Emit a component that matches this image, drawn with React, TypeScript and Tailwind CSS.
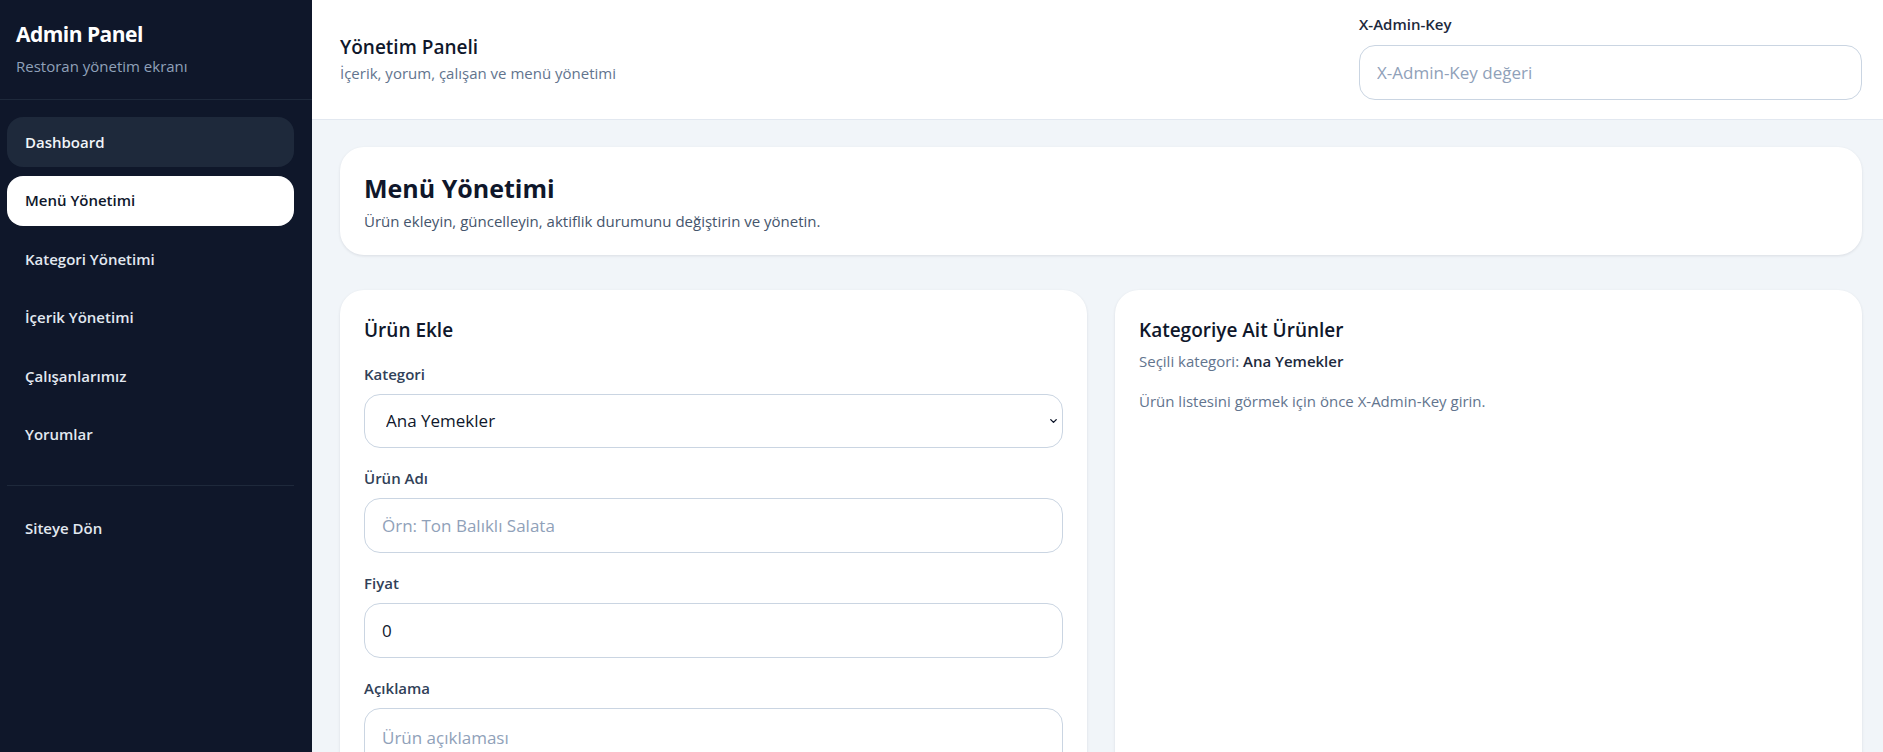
import { ChevronDown } from "lucide-react";

type NavItem = {
    label: string;
    state?: "hover" | "active";
};

const navItems: NavItem[] = [
    { label: "Dashboard", state: "hover" },
    { label: "Menü Yönetimi", state: "active" },
    { label: "Kategori Yönetimi" },
    { label: "İçerik Yönetimi" },
    { label: "Çalışanlarımız" },
    { label: "Yorumlar" },
];

const navClass = (state?: NavItem["state"]) => {
    const base =
        "flex h-[50px] items-center rounded-2xl pl-[18px] text-[15px] font-semibold";
    if (state === "active") return `${base} bg-white text-slate-900`;
    if (state === "hover") return `${base} bg-[#1e293b] text-slate-100`;
    return `${base} text-slate-200`;
};

const Sidebar = () => (
    <aside className="w-[312px] shrink-0 bg-[#0f172a]">
        <div className="h-[100px] border-b border-[#1e293b] px-4 pt-5">
            <h1 className="text-[21px] font-bold leading-7 tracking-tight text-white">
                Admin Panel
            </h1>
            <p className="mt-2 text-[15px] leading-5 text-slate-400">
                Restoran yönetim ekranı
            </p>
        </div>
        <nav className="flex flex-col gap-[8.5px] pl-[7px] pr-[18px] pt-[17px]">
            {navItems.map((item) => (
                <a key={item.label} href="#" className={navClass(item.state)}>
                    {item.label}
                </a>
            ))}
            <div className="mb-[9px] mt-[17px] h-px bg-[#1e293b]" />
            <a href="#" className={navClass()}>
                Siteye Dön
            </a>
        </nav>
    </aside>
);

const Field = ({
    label,
    children,
}: {
    label: string;
    children: React.ReactNode;
}) => (
    <div className="flex flex-col">
        <label className="mb-[10px] text-[15px] font-semibold leading-5 text-slate-700">
            {label}
        </label>
        {children}
    </div>
);

const inputClass =
    "h-[55px] w-full rounded-2xl border border-slate-300 bg-white px-[17px] text-[17px] text-slate-900 outline-none placeholder:text-slate-400";

const App = () => {
    return (
        <div className="flex min-h-screen font-['Open_Sans',sans-serif]">
            <Sidebar />
            <main className="flex min-w-0 flex-1 flex-col bg-[#f1f5f9]">
                <header className="flex h-[120px] shrink-0 items-center justify-between border-b border-slate-200 bg-white pl-7 pr-[21px]">
                    <div className="mb-1">
                        <h2 className="text-[19px] font-semibold leading-7 text-slate-900">
                            Yönetim Paneli
                        </h2>
                        <p className="mt-0.5 text-[15px] leading-5 text-slate-500">
                            İçerik, yorum, çalışan ve menü yönetimi
                        </p>
                    </div>
                    <div className="self-start pt-[14px]">
                        <label className="mb-[11px] block text-[15px] font-semibold leading-5 text-slate-800">
                            X-Admin-Key
                        </label>
                        <input
                            className="h-[55px] w-[503px] rounded-2xl border border-slate-300 bg-white px-[17px] text-[17px] text-slate-900 outline-none placeholder:text-slate-400"
                            placeholder="X-Admin-Key değeri"
                        />
                    </div>
                </header>

                <div className="flex flex-col gap-[35px] pb-10 pl-7 pr-[21px] pt-[27px]">
                    <section className="rounded-3xl bg-white p-6 shadow-[0_1px_3px_rgba(15,23,42,0.1)]">
                        <h1 className="text-[25px] font-bold leading-[35px] text-slate-900">
                            Menü Yönetimi
                        </h1>
                        <p className="mt-[5px] text-[15px] leading-5 text-slate-600">
                            Ürün ekleyin, güncelleyin, aktiflik durumunu değiştirin ve
                            yönetin.
                        </p>
                    </section>

                    <div className="grid grid-cols-2 gap-7">
                        <section className="rounded-3xl bg-white p-6 shadow-[0_1px_3px_rgba(15,23,42,0.1)]">
                            <h3 className="text-[19px] font-semibold leading-8 text-slate-900">
                                Ürün Ekle
                            </h3>
                            <form className="mt-[18px] flex flex-col gap-5">
                                <Field label="Kategori">
                                    <div className="relative">
                                        <select className="h-[54px] w-full appearance-none rounded-2xl border border-slate-300 bg-white pl-[21px] pr-10 text-[17px] text-slate-900 outline-none">
                                            <option>Ana Yemekler</option>
                                            <option>Başlangıçlar</option>
                                            <option>Tatlılar</option>
                                            <option>İçecekler</option>
                                        </select>
                                        <ChevronDown
                                            className="pointer-events-none absolute right-[4px] top-1/2 -translate-y-1/2 text-slate-900"
                                            size={11}
                                            strokeWidth={3}
                                        />
                                    </div>
                                </Field>
                                <Field label="Ürün Adı">
                                    <input
                                        className={inputClass}
                                        placeholder="Örn: Ton Balıklı Salata"
                                    />
                                </Field>
                                <Field label="Fiyat">
                                    <input className={inputClass} defaultValue="0" />
                                </Field>
                                <Field label="Açıklama">
                                    <textarea
                                        className="h-[120px] w-full resize-none rounded-2xl border border-slate-300 bg-white px-[17px] py-[17px] text-[17px] leading-6 text-slate-900 outline-none placeholder:text-slate-400"
                                        placeholder="Ürün açıklaması"
                                    />
                                </Field>
                                <button
                                    type="button"
                                    className="h-[52px] rounded-2xl bg-[#0f172a] text-[15px] font-semibold text-white"
                                >
                                    Ürünü Ekle
                                </button>
                            </form>
                        </section>

                        <section className="rounded-3xl bg-white p-6 shadow-[0_1px_3px_rgba(15,23,42,0.1)]">
                            <h3 className="text-[19px] font-semibold leading-8 text-slate-900">
                                Kategoriye Ait Ürünler
                            </h3>
                            <p className="mt-[5px] text-[15px] leading-5 text-slate-500">
                                Seçili kategori:{" "}
                                <span className="font-semibold text-slate-800">
                                    Ana Yemekler
                                </span>
                            </p>
                            <p className="mt-5 text-[15px] leading-5 text-slate-500">
                                Ürün listesini görmek için önce X-Admin-Key girin.
                            </p>
                        </section>
                    </div>
                </div>
            </main>
        </div>
    );
};

export default App;
